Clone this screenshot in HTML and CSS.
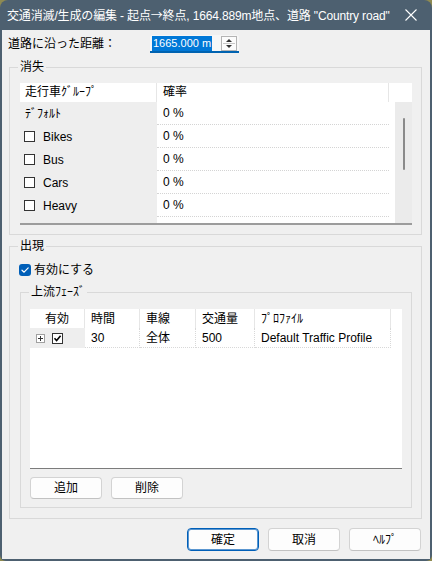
FILE: index.html
```html
<!DOCTYPE html>
<html lang="ja">
<head>
<meta charset="utf-8">
<title>交通消滅/生成の編集</title>
<link rel="stylesheet" href="styles.css">
</head>
<body>
<div class="window">
  <div class="titlebar">
    <span class="title">交通消滅/生成の編集 - 起点<span class="arrow">→</span>終点, 1664.889m地点、道路 "Country road"</span>
    <svg class="close" width="12" height="12" viewBox="0 0 12 12"><path d="M0.5 0.5 L11.5 11.5 M11.5 0.5 L0.5 11.5" stroke="#ffffff" stroke-width="1.1" fill="none"/></svg>
  </div>
  <div class="client">
    <div class="dist-row">
      <span class="dist-label">道路に沿った距離：</span>
      <div class="spin">
        <span class="spin-sel">1665.000 m</span>
        <span class="spin-btn">
          <svg width="14" height="13" viewBox="0 0 14 13"><path d="M4 5 L7 2 L10 5 Z" fill="#333"/><path d="M1 6.5 H13" stroke="#c8c8c8" stroke-width="1"/><path d="M4 8 L7 11 L10 8 Z" fill="#333"/></svg>
        </span>
      </div>
    </div>

    <fieldset class="group g-lost">
      <legend>消失</legend>
      <div class="grid1">
        <div class="g1-head">
          <div class="h1">走行車ｸﾞﾙｰﾌﾟ</div>
          <div class="h2">確率</div>
          <div class="h3"></div>
        </div>
        <div class="g1-body">
          <div class="g1-rows">
            <div class="g1-row"><div class="c1">ﾃﾞﾌｫﾙﾄ</div><div class="c2">0 %</div></div>
            <div class="g1-row"><div class="c1"><span class="cb"></span>Bikes</div><div class="c2">0 %</div></div>
            <div class="g1-row"><div class="c1"><span class="cb"></span>Bus</div><div class="c2">0 %</div></div>
            <div class="g1-row"><div class="c1"><span class="cb"></span>Cars</div><div class="c2">0 %</div></div>
            <div class="g1-row"><div class="c1"><span class="cb"></span>Heavy</div><div class="c2">0 %</div></div>
            <div class="g1-row"><div class="c1"><span class="cb cb-dim"></span></div><div class="c2"></div></div>
          </div>
          <div class="vscroll"><div class="thumb"></div></div>
        </div>
      </div>
    </fieldset>

    <fieldset class="group g-gen">
      <legend>出現</legend>
      <div class="chk-row">
        <span class="w11chk"><svg width="12" height="12" viewBox="0 0 12 12"><path d="M3 6.2 L5.1 8.2 L9.2 3.9" stroke="#ffffff" stroke-width="1.2" fill="none" stroke-linecap="round" stroke-linejoin="round"/></svg></span>
        <span>有効にする</span>
      </div>
      <fieldset class="group g-phase">
        <legend>上流ﾌｪｰｽﾞ</legend>
        <div class="grid2">
          <div class="g2-head">
            <div class="k k1 center">有効</div>
            <div class="k k2">時間</div>
            <div class="k k3">車線</div>
            <div class="k k4">交通量</div>
            <div class="k k5">ﾌﾟﾛﾌｧｲﾙ</div>
          </div>
          <div class="g2-row">
            <div class="k k1 gray">
              <span class="exp"><svg width="7" height="7" viewBox="0 0 7 7"><path d="M1 3.5 H6 M3.5 1 V6" stroke="#333" stroke-width="1"/></svg></span>
              <span class="cb cb-on"><svg width="9" height="9" viewBox="0 0 9 9"><path d="M1.5 4.2 L3.6 6.5 L7.6 1.8" stroke="#000" stroke-width="1.6" fill="none"/></svg></span>
            </div>
            <div class="k k2 dot">30</div>
            <div class="k k3 dot">全体</div>
            <div class="k k4 dot">500</div>
            <div class="k k5 dot">Default Traffic Profile</div>
          </div>
        </div>
        <div class="btnrow">
          <button class="btn">追加</button>
          <button class="btn">削除</button>
        </div>
      </fieldset>
    </fieldset>

    <div class="footer">
      <button class="btn btn-default">確定</button>
      <button class="btn">取消</button>
      <button class="btn">ﾍﾙﾌﾟ</button>
    </div>
  </div>
</div>
</body>
</html>
```

FILE: styles.css
```css
html, body {
  margin: 0;
  padding: 0;
}
body {
  width: 432px;
  height: 561px;
  overflow: hidden;
  background: #8e8a52;
  font-family: "Liberation Sans", "Noto Sans CJK JP", sans-serif;
  font-size: 12px;
  line-height: 14px;
  color: #000;
}
.window {
  width: 432px;
  height: 561px;
  background: #4d6070;
  border-radius: 8px 8px 6px 6px;
  display: flex;
  flex-direction: column;
  overflow: hidden;
}
.titlebar {
  height: 30px;
  flex: 0 0 30px;
  display: flex;
  align-items: center;
  padding-left: 7px;
  color: #ffffff;
  font-size: 12px;
}
.title {
  flex: 1;
  white-space: nowrap;
  letter-spacing: -0.15px;
}
.arrow {
  font-family: "Noto Sans CJK JP", sans-serif;
}
.close {
  margin-right: 15px;
  flex: 0 0 12px;
}
.client {
  flex: 1;
  margin: 0 2px 2px 2px;
  background: #f0f0f0;
  padding: 0 8px 0 7px;
  display: flex;
  flex-direction: column;
}

/* distance row */
.dist-row {
  margin-top: 5px;
  height: 18px;
  display: flex;
  align-items: center;
}
.dist-label {
  width: 142px;
  margin-left: -1px;
  white-space: nowrap;
}
.spin {
  width: 89px;
  height: 18px;
  box-sizing: border-box;
  border-bottom: 2px solid #0063b1;
  background: #f7f7f7;
  border-radius: 3px 3px 0 0;
  display: flex;
  align-items: center;
  padding-left: 2px;
}
.spin-sel {
  background: #0078d7;
  color: #ffffff;
  font-size: 11px;
  line-height: 15px;
  height: 15px;
  padding: 0 1px;
  white-space: nowrap;
}
.spin-btn {
  margin-left: auto;
  margin-right: 2px;
  width: 16px;
  height: 15px;
  box-sizing: border-box;
  border: 1px solid #b4b4b4;
  background: #fcfcfc;
  display: flex;
  align-items: center;
  justify-content: center;
}

/* group boxes */
.group {
  margin: 0;
  border: 1px solid #d9d9d9;
  min-width: 0;
}
.group legend {
  padding: 0 2px;
  margin-left: -2px;
  line-height: 14px;
  height: 14px;
}
.g-lost {
  margin-top: 7px;
  padding: 9px 9px 9px 10px;
}
.g-gen {
  margin-top: 4px;
  padding: 10px 9px 10px 9px;
}
.g-gen > legend {
  margin-left: -1px;
}
.g-phase {
  margin-top: 8px;
  margin-left: 1px;
  padding: 10px 9px 8px 9px;
}
.g-phase > legend {
  margin-left: -1px;
}

/* grid 1 */
.grid1 {
  width: 392px;
  height: 142px;
  box-sizing: border-box;
  border-bottom: 2px solid #9c9c9c;
  display: flex;
  flex-direction: column;
  background: #ffffff;
  overflow: hidden;
}
.g1-head {
  height: 19px;
  flex: 0 0 19px;
  display: flex;
  background: #ffffff;
}
.g1-head > div {
  box-sizing: border-box;
  line-height: 19px;
  white-space: nowrap;
}
.h1 {
  width: 137px;
  padding-left: 5px;
  border-right: 1px solid #e6e6e6;
}
.h2 {
  width: 232px;
  padding-left: 6px;
  border-right: 1px solid #e6e6e6;
}
.h3 {
  flex: 1;
}
.g1-body {
  flex: 1;
  display: flex;
  overflow: hidden;
}
.g1-rows {
  width: 375px;
  background: #ffffff;
}
.g1-row {
  height: 23px;
  display: flex;
}
.c1 {
  width: 137px;
  box-sizing: border-box;
  background: #eeeeee;
  padding-left: 5px;
  display: flex;
  align-items: center;
  white-space: nowrap;
}
.c2 {
  width: 232px;
  box-sizing: border-box;
  padding-left: 6px;
  border-bottom: 1px dotted #d4d4d4;
  display: flex;
  align-items: center;
}
.cb {
  width: 11px;
  height: 11px;
  box-sizing: border-box;
  border: 1px solid #333333;
  background: #ffffff;
  margin-left: -1px;
  margin-right: 8px;
  display: inline-flex;
  align-items: center;
  justify-content: center;
  flex: 0 0 11px;
}
.cb-dim {
  margin-top: 12px;
  border-color: #9a9a9a;
}
.vscroll {
  flex: 0 0 17px;
  background: #ebebeb;
  display: flex;
  justify-content: center;
}
.thumb {
  width: 2px;
  height: 52px;
  margin-top: 16px;
  background: #8a8a8a;
  border-radius: 1px;
}

/* enable checkbox */
.chk-row {
  height: 14px;
  display: flex;
  align-items: center;
}
.w11chk {
  width: 12px;
  height: 12px;
  border-radius: 3px;
  background: #005fb8;
  margin-right: 3px;
  display: inline-flex;
}

/* grid 2 */
.grid2 {
  width: 372px;
  height: 160px;
  box-sizing: border-box;
  background: #ffffff;
  border-bottom: 1px solid #7c7c7c;
}
.g2-head,
.g2-row {
  display: flex;
}
.g2-head {
  height: 19px;
}
.g2-row {
  height: 20px;
}
.k {
  box-sizing: border-box;
  padding-left: 6px;
  display: flex;
  align-items: center;
  white-space: nowrap;
}
.g2-head .k {
  border-right: 1px solid #e6e6e6;
}
.k1 { width: 55px; }
.k2 { width: 55px; }
.k3 { width: 56px; }
.k4 { width: 59px; }
.k5 { width: 136px; }
.center {
  justify-content: center;
  padding-left: 0;
}
.gray {
  background: #eeeeee;
}
.dot {
  border-right: 1px dotted #d8d8d8;
  border-bottom: 1px dotted #d8d8d8;
}
.exp {
  width: 9px;
  height: 9px;
  box-sizing: border-box;
  border: 1px solid #a0a0a0;
  background: #ffffff;
  display: inline-flex;
  align-items: center;
  justify-content: center;
  margin-right: 7px;
}
.cb-on {
  margin-left: 0;
  margin-right: 0;
}

/* buttons */
.btnrow {
  margin-top: 8px;
  display: flex;
  gap: 9px;
}
.btn {
  width: 72px;
  height: 22px;
  box-sizing: border-box;
  border: 1px solid #d3d3d3;
  border-bottom-color: #c2c2c2;
  border-radius: 4px;
  background: #fdfdfd;
  font-family: "Liberation Sans", "Noto Sans CJK JP", sans-serif;
  font-size: 12px;
  line-height: 14px;
  color: #000;
  padding: 0;
  margin: 0;
}
.footer {
  margin-top: 9px;
  padding-right: 1px;
  display: flex;
  justify-content: flex-end;
  gap: 9px;
}
.footer .btn {
  height: 23px;
}
.btn-default {
  border: 1px solid #005fb8;
  box-shadow: inset 0 0 0 1px #5a96d0;
}
```
